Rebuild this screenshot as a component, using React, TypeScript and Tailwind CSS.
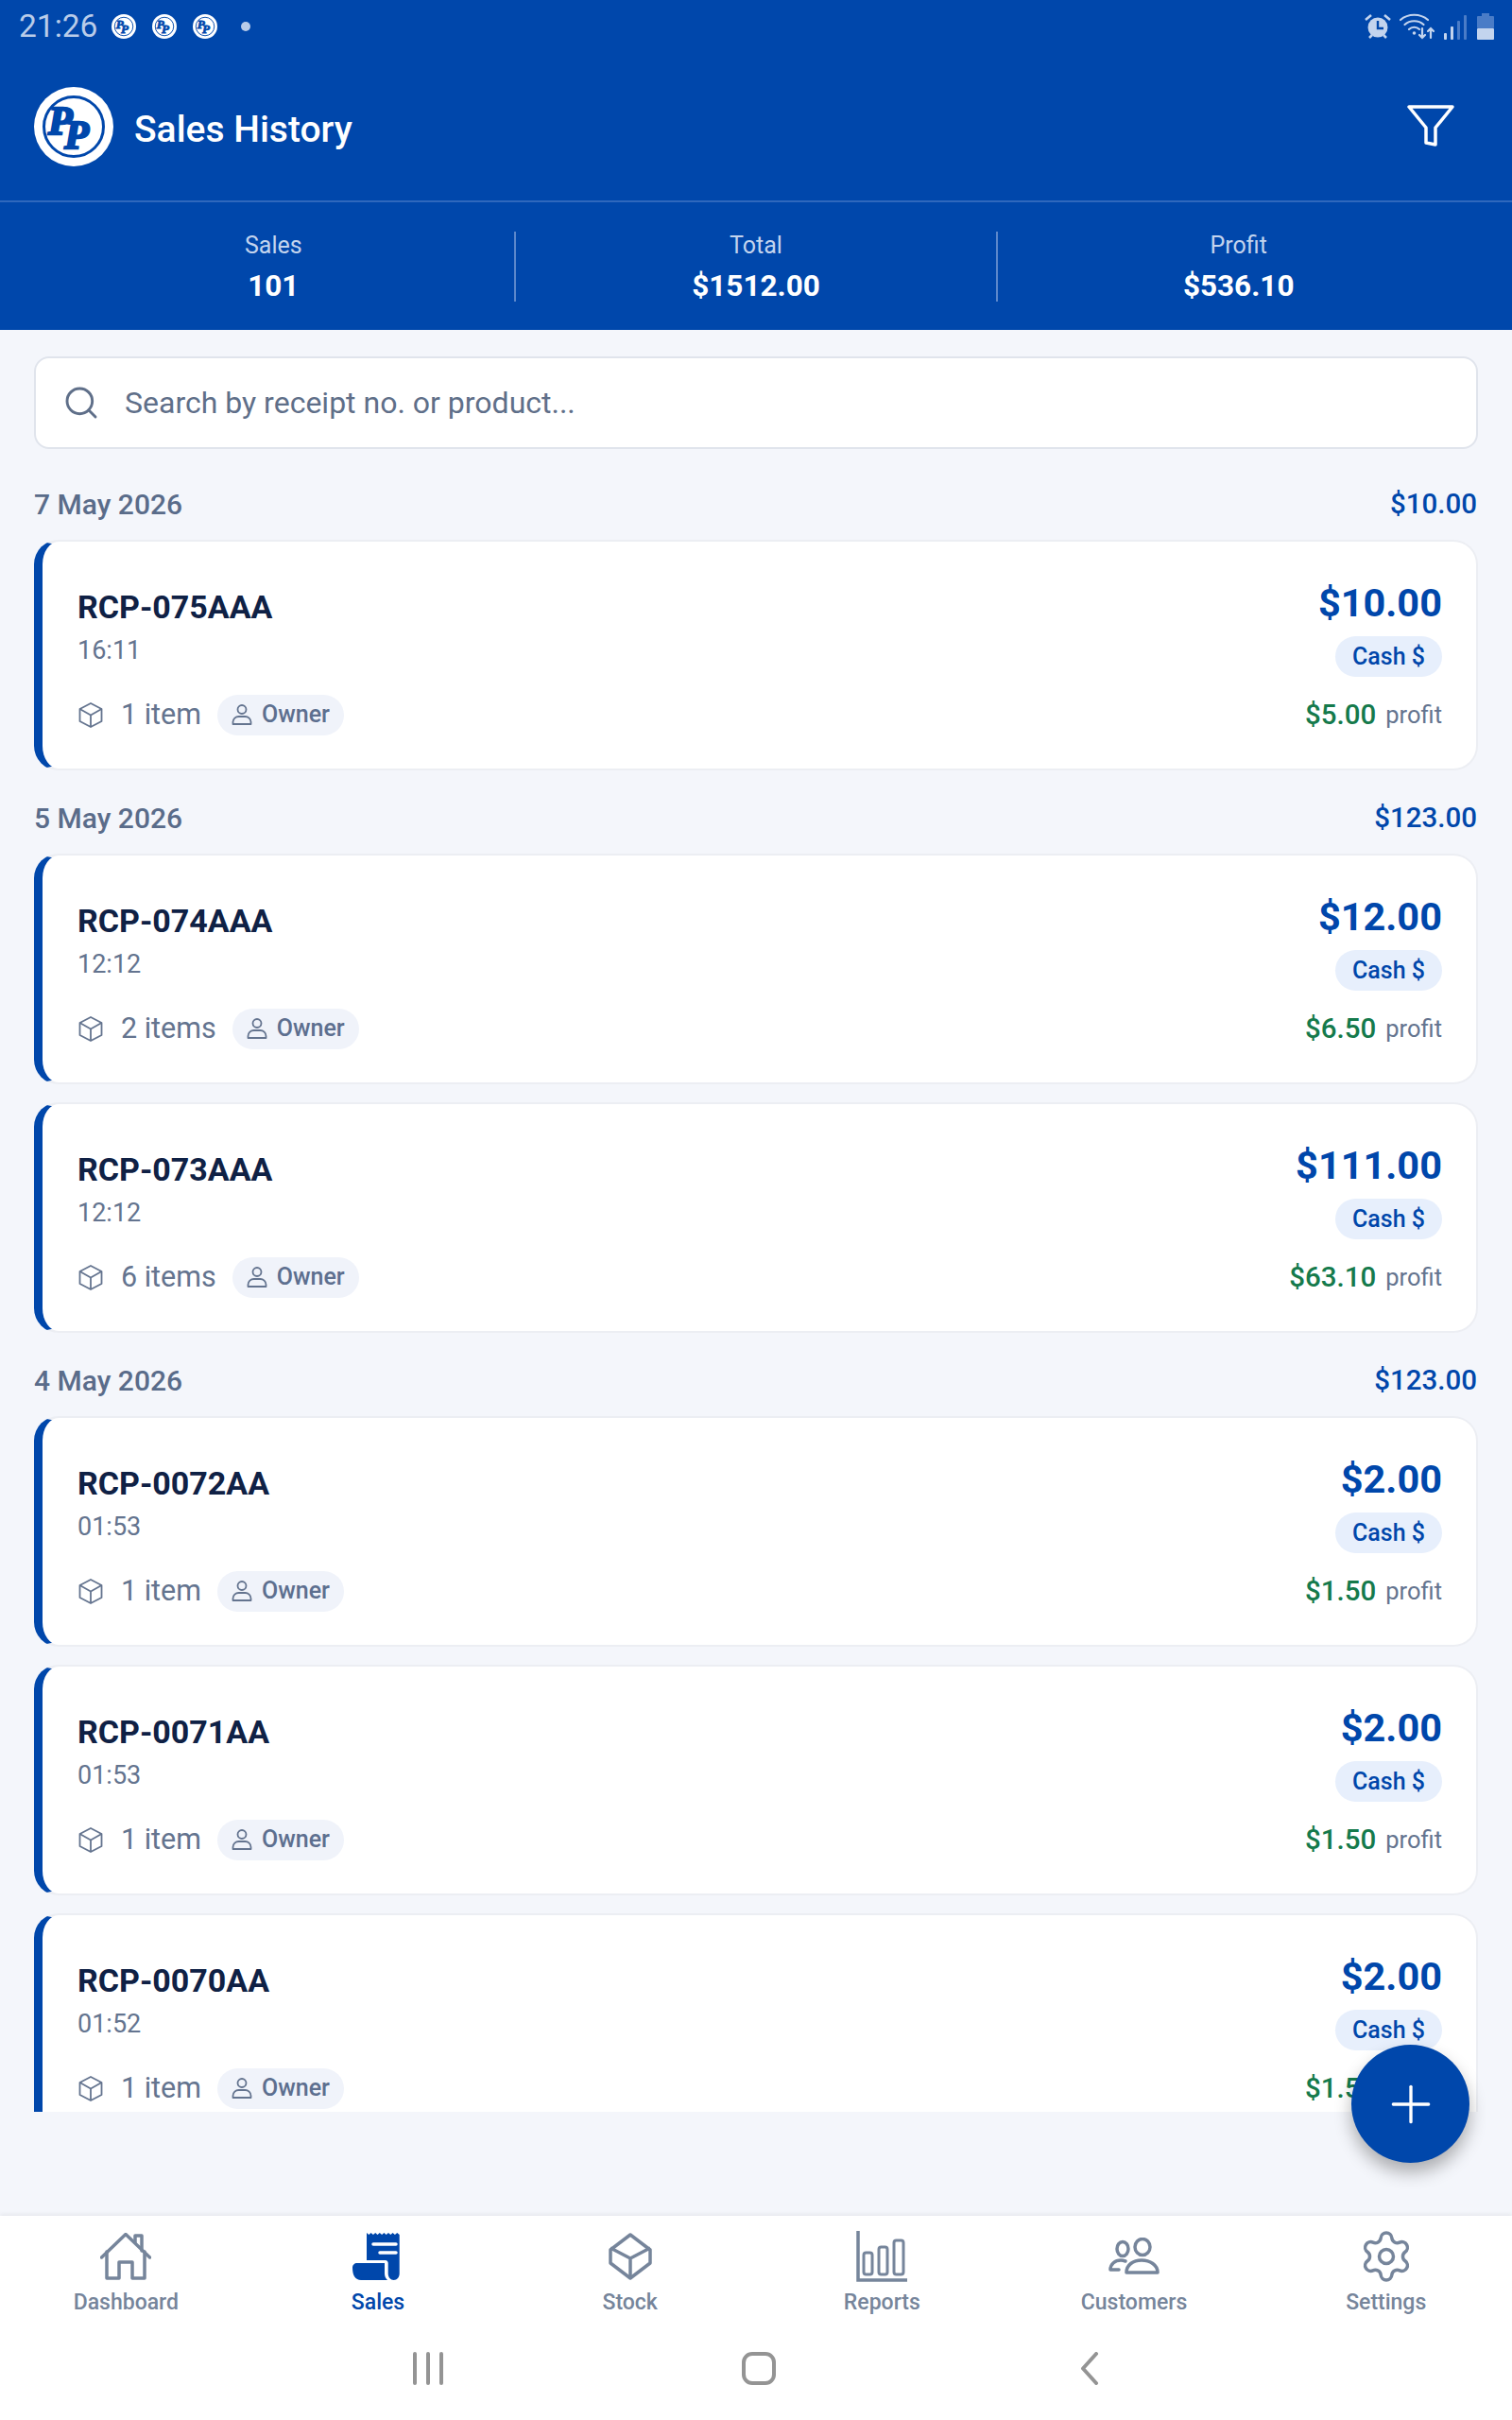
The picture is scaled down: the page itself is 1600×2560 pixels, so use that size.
import { Plus, Search, Settings } from "lucide-react";

type Sale = { id: string; time: string; items: string; total: string; profit: string };

const groups: { date: string; total: string; sales: Sale[] }[] = [
  {
    date: "7 May 2026",
    total: "$10.00",
    sales: [{ id: "RCP-075AAA", time: "16:11", items: "1 item", total: "$10.00", profit: "$5.00" }],
  },
  {
    date: "5 May 2026",
    total: "$123.00",
    sales: [
      { id: "RCP-074AAA", time: "12:12", items: "2 items", total: "$12.00", profit: "$6.50" },
      { id: "RCP-073AAA", time: "12:12", items: "6 items", total: "$111.00", profit: "$63.10" },
    ],
  },
  {
    date: "4 May 2026",
    total: "$123.00",
    sales: [
      { id: "RCP-0072AA", time: "01:53", items: "1 item", total: "$2.00", profit: "$1.50" },
      { id: "RCP-0071AA", time: "01:53", items: "1 item", total: "$2.00", profit: "$1.50" },
      { id: "RCP-0070AA", time: "01:52", items: "1 item", total: "$2.00", profit: "$1.50" },
    ],
  },
];

const stats = [
  { label: "Sales", value: "101" },
  { label: "Total", value: "$1512.00" },
  { label: "Profit", value: "$536.10" },
];

function Logo({ className }: { className: string }) {
  return (
    <svg viewBox="0 0 84 84" className={className}>
      <circle cx="42" cy="42" r="42" fill="#fff" />
      <circle cx="42" cy="42" r="31.5" fill="none" stroke="#0047ab" strokeWidth="3" />
      <text x="15" y="50" fontFamily="'Liberation Serif', serif" fontWeight="700" fontStyle="italic" fontSize="42" fill="#0047ab" stroke="#0047ab" strokeWidth="2.5">
        P<tspan dx="-8.5" dy="15">P</tspan>
      </text>
    </svg>
  );
}

function StatusBar() {
  return (
    <div className="flex h-[55px] items-center justify-between pl-[20px] pr-[19px]">
      <div className="flex items-center">
        <span className="text-[33.5px] leading-none text-[#b9cce9]">21:26</span>
        <Logo className="ml-[15px] h-[26px] w-[26px]" />
        <Logo className="ml-[17px] h-[26px] w-[26px]" />
        <Logo className="ml-[17px] h-[26px] w-[26px]" />
        <span className="ml-[25px] h-[10px] w-[10px] rounded-full bg-[#b9cce9]" />
      </div>
      <div className="flex items-center">
        {/* alarm */}
        <svg viewBox="0 0 30 28" className="h-[28px] w-[30px]" fill="none" stroke="#c3d4ee">
          <circle cx="15" cy="15" r="10.5" fill="#c3d4ee" stroke="none" />
          <path d="M15 8v8h6" stroke="#0047ab" strokeWidth="2.4" />
          <path d="M2 7l6-5M28 7l-6-5M6 26l3-3M24 26l-3-3" strokeWidth="2.6" />
        </svg>
        {/* wifi */}
        <svg viewBox="0 0 38 28" className="ml-[8px] h-[28px] w-[38px]" fill="none" stroke="#c3d4ee" strokeWidth="2.2" strokeLinecap="round">
          <path d="M1 7c8-7 21-7 29 0" />
          <path d="M5.500 12c5.500-5 14.500-5 20 0" />
          <path d="M10 17c3-3 8-3 11 0" />
          <circle cx="15.500" cy="21" r="1.800" fill="#c3d4ee" stroke="none" />
          <path d="M24 16v10M21 23l3 3 3-3M33 26V16M30 19l3-3 3 3" />
        </svg>
        {/* signal */}
        <svg viewBox="0 0 24 28" className="ml-[9px] h-[28px] w-[24px]">
          <rect x="0" y="21" width="3" height="7" rx="1" fill="#c3d4ee" />
          <rect x="7" y="14" width="3" height="14" rx="1" fill="#c3d4ee" />
          <rect x="14" y="8" width="3" height="20" rx="1" fill="#4a7cc7" />
          <rect x="21" y="2" width="3" height="26" rx="1" fill="#4a7cc7" />
        </svg>
        {/* battery */}
        <svg viewBox="0 0 18 28" className="ml-[11px] h-[28px] w-[18px]">
          <rect x="5" y="0" width="8" height="4" fill="#4a7cc7" />
          <rect x="0" y="3" width="18" height="13" rx="1" fill="#4a7cc7" />
          <rect x="0" y="16" width="18" height="12" rx="1" fill="#c3d4ee" />
        </svg>
      </div>
    </div>
  );
}

function Header() {
  return (
    <header className="bg-[#0047ab]">
      <StatusBar />
      <div className="flex h-[159px] items-center justify-between border-b-2 border-[#2f68bd] pl-[36px] pr-[61px]">
        <div className="flex items-center gap-[22px]">
          <Logo className="mt-[1px] h-[84px] w-[84px]" />
          <h1 className="mt-[7px] text-[39px] font-medium leading-none text-white">Sales History</h1>
        </div>
        <svg viewBox="0 0 50 44" className="-mt-[1px] h-[44px] w-[50px]" fill="none" stroke="#fff" strokeWidth="3.500" strokeLinejoin="round">
          <path d="M2 2h46L30 24v18l-10-2V24z" />
        </svg>
      </div>
      <div className="flex h-[135px] items-center px-[35px]">
        {stats.map((s, i) => (
          <div key={s.label} className={i > 0 ? "flex h-[74px] flex-1 flex-col items-center justify-center border-l-2 border-[#5b87cb] pt-[2px]" : "flex h-[74px] flex-1 flex-col items-center justify-center pt-[2px]"}>
            <span className="shrink-0 text-[25px] leading-[36px] text-[#c3d4ee]">{s.label}</span>
            <span className="mt-[5px] shrink-0 text-[31.5px] font-bold leading-[40px] text-white">{s.value}</span>
          </div>
        ))}
      </div>
    </header>
  );
}

function BoxIcon() {
  return (
    <svg viewBox="0 0 26 27" className="ml-[1px] h-[27px] w-[26px]" fill="none" stroke="#64748f" strokeWidth="1.800" strokeLinejoin="round">
      <path d="M13 1l11.500 6v13L13 26 1.500 20V7z" />
      <path d="M1.500 7L13 13.500 24.500 7M13 13.500V26" />
    </svg>
  );
}

function UserIcon() {
  return (
    <svg viewBox="0 0 22 22" className="h-[22px] w-[22px]" fill="none" stroke="#64748f" strokeWidth="1.800">
      <circle cx="11" cy="5.500" r="4.500" />
      <path d="M1.500 21v-2c0-3.500 3-6 6-6h7c3 0 6 2.500 6 6v2z" strokeLinejoin="round" />
    </svg>
  );
}

function SaleCard({ sale }: { sale: Sale }) {
  return (
    <div className="flex h-[244px] shrink-0 justify-between rounded-[26px] border-2 border-l-[9px] border-[#eceef3] border-l-[#0047ab] bg-white pl-[37px] pr-[36px] pt-[38px]">
      <div>
        <div className="mt-[11px] text-[34px] font-bold leading-[40px] text-[#0f2145]">{sale.id}</div>
        <div className="mt-[8px] text-[27px] leading-[36px] text-[#64748f]">{sale.time}</div>
        <div className="mt-[28px] flex h-[44px] items-center">
          <BoxIcon />
          <span className="ml-[19px] text-[30.5px] text-[#64748f]">{sale.items}</span>
          <span className="ml-[17px] flex h-[43px] items-center gap-[10px] rounded-full bg-[#f0f3fa] pl-[15px] pr-[15px] text-[25px] font-medium text-[#5d6f8f]">
            <UserIcon />
            Owner
          </span>
        </div>
      </div>
      <div className="flex flex-col items-end">
        <div className="mt-[2px] text-[41.5px] font-bold leading-[50px] text-[#0047ab]">{sale.total}</div>
        <div className="mt-[10px] flex h-[43px] items-center rounded-full bg-[#e7effc] px-[18px] text-[25px] font-medium text-[#0047ab]">Cash $</div>
        <div className="mt-[20px] flex h-[40px] items-center gap-[10px]">
          <span className="text-[29.5px] font-medium text-[#157a4c]">{sale.profit}</span>
          <span className="text-[25.5px] text-[#64748f]">profit</span>
        </div>
      </div>
    </div>
  );
}

function NavItem({ label, active, children }: { label: string; active?: boolean; children: React.ReactNode }) {
  return (
    <div className="flex flex-1 flex-col items-center">
      <div className="flex h-[54px] items-center justify-center">{children}</div>
      <span className={active ? "mt-[7px] text-[23px] font-medium leading-[30px] text-[#0047ab]" : "mt-[7px] text-[23px] font-medium leading-[30px] text-[#76859b]"}>{label}</span>
    </div>
  );
}

function BottomNav() {
  return (
    <nav className="bg-white shadow-[0_-2px_4px_rgba(0,0,0,0.06)]">
      <div className="flex h-[126px] pt-[16px]">
        <NavItem label="Dashboard">
          <svg viewBox="0 0 54 50" className="h-[50px] w-[54px]" fill="none" stroke="#76859b" strokeWidth="3.500" strokeLinejoin="round" strokeLinecap="round">
            <path d="M1.500 26L27 1.500 52.500 26" />
            <path d="M7 20v28h13V31h14v17h13V20" />
            <path d="M37 10V3h7v16" />
          </svg>
        </NavItem>
        <NavItem label="Sales" active>
          <svg viewBox="0 0 54 50" className="h-[50px] w-[54px]">
            <path d="M15 0l2.300 2 2.300-2 2.300 2 2.300-2 2.300 2 2.300-2 2.300 2 2.300-2 2.300 2 2.300-2 2.300 2 2.300-2 2.300 2 2.300-2 2.500 2V43c0 4-2.500 7-6 7s-6-3-6-7V32c0-1.500-1-3-3-3H15z" fill="#0047ab" />
            <path d="M22 12h24M29 21h17" stroke="#fff" strokeWidth="3.500" strokeLinecap="round" />
            <path d="M5 32h29v11c0 3 1 5 3 7H9c-6 0-9-5-9-13 0-3 2-5 5-5z" fill="#0047ab" />
          </svg>
        </NavItem>
        <NavItem label="Stock">
          <svg viewBox="0 0 48 50" className="h-[50px] w-[48px]" fill="none" stroke="#76859b" strokeWidth="3.500" strokeLinejoin="round">
            <path d="M24 2l21 16v14L24 48 3 32V18z" />
            <path d="M3 16l21 11 21-11M24 27v21" />
          </svg>
        </NavItem>
        <NavItem label="Reports">
          <svg viewBox="0 0 54 54" className="h-[54px] w-[54px]" fill="none" stroke="#76859b" strokeWidth="3">
            <path d="M2 0v52h52" strokeWidth="3.500" />
            <rect x="8" y="23" width="9" height="23" rx="2.500" />
            <rect x="24" y="17" width="9" height="29" rx="2.500" />
            <rect x="40" y="10" width="10" height="36" rx="2.500" />
          </svg>
        </NavItem>
        <NavItem label="Customers">
          <svg viewBox="0 0 54 40" className="h-[40px] w-[54px]" fill="none" stroke="#76859b" strokeWidth="3.500">
            <ellipse cx="36" cy="10" rx="8" ry="8.500" />
            <ellipse cx="15" cy="12" rx="6" ry="7.500" />
            <path d="M19 37c0-8 7-13 16-13s17 5 17 13z" strokeLinejoin="round" />
            <path d="M2 34h9M2 34c0-6 5-10 11-10 2 0 3 .3 5 1" strokeLinecap="round" />
          </svg>
        </NavItem>
        <NavItem label="Settings">
          <Settings size={60} strokeWidth={1.400} color="#76859b" />
        </NavItem>
      </div>
      <div className="flex h-[90px] items-start justify-center pl-[6px] pt-[18px]">
        <div className="flex w-[350px] justify-center">
          <div className="flex h-[35px] gap-[10px]">
            <span className="h-full w-[4px] rounded-full bg-[#949494]" />
            <span className="h-full w-[4px] rounded-full bg-[#949494]" />
            <span className="h-full w-[4px] rounded-full bg-[#949494]" />
          </div>
        </div>
        <div className="flex w-[350px] justify-center">
          <span className="h-[35px] w-[36px] rounded-[11px] border-[4px] border-[#949494]" />
        </div>
        <div className="flex w-[350px] justify-center">
          <svg viewBox="0 0 20 35" className="h-[35px] w-[20px]" fill="none" stroke="#949494" strokeWidth="4" strokeLinecap="round" strokeLinejoin="round">
            <path d="M17 2L3 17.500 17 33" />
          </svg>
        </div>
      </div>
    </nav>
  );
}

export default function App() {
  return (
    <div className="relative flex h-[2560px] w-[1600px] flex-col overflow-hidden bg-[#f4f6fb] font-['Roboto',sans-serif]">
      <Header />
      <main className="flex h-[1885px] flex-col overflow-hidden px-[36px]">
        <div className="mb-[8px] mt-[28px] flex h-[98px] shrink-0 items-center gap-[26px] rounded-[16px] border-2 border-[#e0e4ec] bg-white pl-[28px]">
          <Search size={40} strokeWidth={1.750} color="#5f6f89" />
          <span className="text-[32px] text-[#5f6f89]">Search by receipt no. or product...</span>
        </div>
        {groups.map((g) => (
          <section key={g.date} className="flex shrink-0 flex-col gap-[19px]">
            <div className="-mb-[1px] mt-[30px] flex h-[40px] items-center justify-between">
              <span className="text-[30px] font-medium text-[#5a6c8a]">{g.date}</span>
              <span className="pr-[1px] text-[29.5px] font-medium text-[#0047ab]">{g.total}</span>
            </div>
            {g.sales.map((s) => (
              <SaleCard key={s.id} sale={s} />
            ))}
          </section>
        ))}
      </main>
      <div className="flex-1" />
      <BottomNav />
      <button className="absolute left-[1430px] top-[2163px] flex h-[125px] w-[125px] items-center justify-center rounded-full bg-[#0047ab] shadow-[0_10px_18px_rgba(0,0,0,0.3)]">
        <Plus size={64} strokeWidth={1.250} color="#fff" />
      </button>
    </div>
  );
}
